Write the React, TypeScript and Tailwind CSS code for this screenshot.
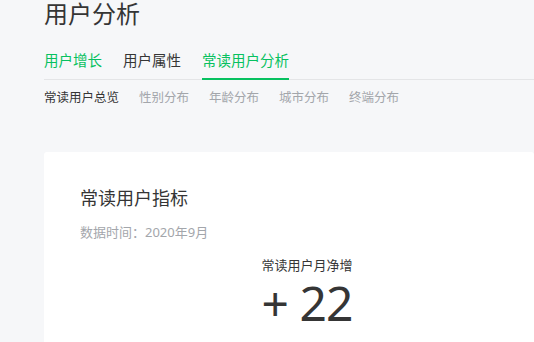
import React from 'react';

const tabs = ['用户增长', '用户属性', '常读用户分析'];
const subTabs = ['常读用户总览', '性别分布', '年龄分布', '城市分布', '终端分布'];

export default function App() {
  const activeTab = 2;
  const activeSub = 0;

  return (
    <div
      className="min-h-screen w-full overflow-hidden bg-[#f6f7f9] pl-[44px] text-[#353535]"
      style={{ fontFamily: '"Noto Sans", "Noto Sans CJK SC", sans-serif' }}
    >
      {/* page title */}
      <h1 className="text-[24px] leading-[28px] font-normal text-[#353535]">用户分析</h1>

      {/* main tabs */}
      <div className="mt-[20px] flex gap-[21px] border-b border-[#e4e5e7]">
        {tabs.map((t, i) => (
          <div
            key={t}
            className={
              i === activeTab
                ? '-mb-px border-b-2 border-[#07c160] pb-[6px] text-[14.5px] leading-[24px] text-[#07c160]'
                : i === 0
                  ? 'pb-[7px] text-[14.5px] leading-[24px] text-[#07c160]'
                  : 'pb-[7px] text-[14.5px] leading-[24px] text-[#353535]'
            }
          >
            {t}
          </div>
        ))}
      </div>

      {/* sub tabs */}
      <div className="mt-[8px] flex gap-[20px]">
        {subTabs.map((t, i) => (
          <div
            key={t}
            className={
              i === activeSub
                ? 'text-[12.5px] leading-[20px] text-[#353535]'
                : 'text-[12.5px] leading-[20px] text-[#a3a6ab]'
            }
          >
            {t}
          </div>
        ))}
      </div>

      {/* card */}
      <div className="mt-[44px] h-[240px] rounded-[3px] bg-white pl-[36px] pt-[33px]">
        <h2 className="text-[18px] leading-[26px] font-normal text-[#353535]">常读用户指标</h2>
        <p className="mt-[12px] text-[13px] leading-[18px] text-[#a3a6ab]">数据时间：2020年9月</p>
        <div className="flex">
          <div className="flex w-[458px] flex-col items-center pt-[15px]">
            <div className="text-[13px] leading-[18px] text-[#353535]">常读用户月净增</div>
            <div className="mt-[5px] text-[48px] leading-[48px] tracking-[-1px] text-[#353535]">+ 22</div>
          </div>
        </div>
      </div>
    </div>
  );
}
